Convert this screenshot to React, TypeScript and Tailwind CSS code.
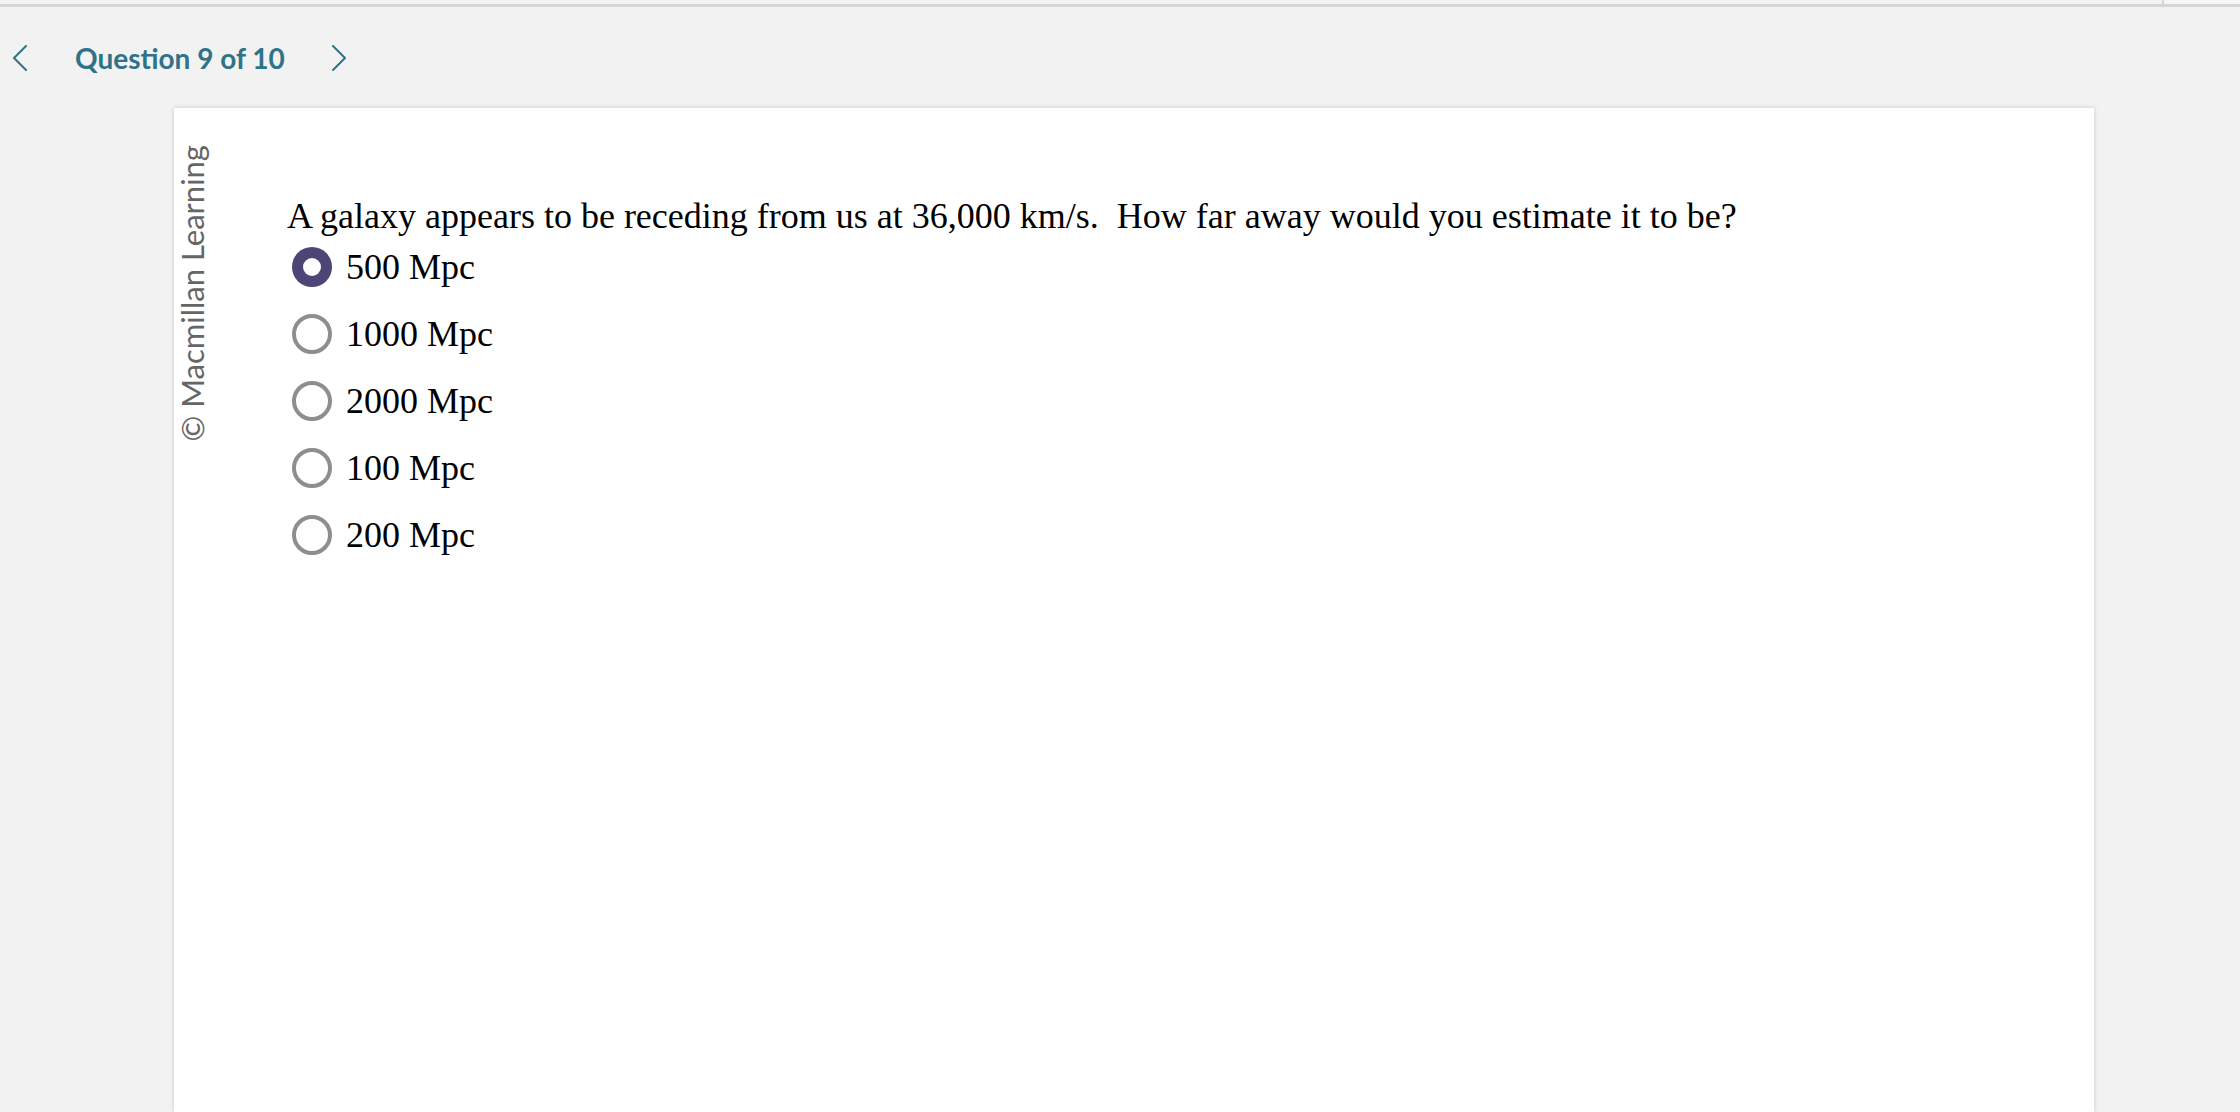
import React from "react";

const options = ["500 Mpc", "1000 Mpc", "2000 Mpc", "100 Mpc", "200 Mpc"];

function Chevron({ dir }: { dir: "left" | "right" }) {
  return (
    <svg width="16" height="26" viewBox="0 0 16 26" className="shrink-0">
      <polyline
        points={dir === "left" ? "14,1 2,13 14,25" : "2,1 14,13 2,25"}
        fill="none"
        stroke="#2f7389"
        strokeWidth="2"
        strokeLinecap="round"
        strokeLinejoin="round"
      />
    </svg>
  );
}

function Radio({ selected }: { selected: boolean }) {
  if (selected) {
    return (
      <div className="w-[40px] h-[40px] rounded-full bg-[#4e4577] flex items-center justify-center shrink-0">
        <div className="w-[18px] h-[18px] rounded-full bg-white" />
      </div>
    );
  }
  return <div className="w-[40px] h-[40px] rounded-full border-[4px] border-[#8e8e8e] bg-white shrink-0" />;
}

export default function App() {
  return (
    <div className="w-[2240px] h-[1112px] overflow-hidden bg-[#f2f2f2] flex flex-col">
      <div className="h-[4px] shrink-0 flex bg-[#f3f3f3]">
        <div className="w-[2162px]" />
        <div className="w-[2px] bg-[#d6d6d6]" />
        <div className="flex-1 bg-[#f6f6f6]" />
      </div>
      <div className="h-[3px] shrink-0 bg-[#d6d6d6]" />
      <div className="h-[101px] shrink-0 flex items-center pl-[12px]">
        <Chevron dir="left" />
        <div className="ml-[47px] font-['Lato',sans-serif] font-bold text-[28px] text-[#2f7389] whitespace-nowrap">
          Question 9 of 10
        </div>
        <div className="ml-[46px]">
          <Chevron dir="right" />
        </div>
      </div>
      <div className="ml-[174px] w-[1920px] flex-1 bg-white shadow-[0_0_4px_rgba(0,0,0,0.18)] flex">
        <div className="w-[113px] shrink-0 pt-[37px] pl-[3px]">
          <div className="[writing-mode:vertical-rl] [text-orientation:sideways] rotate-180 font-['Lato',sans-serif] text-[31px] leading-[31px] text-[#666666] whitespace-nowrap">
            © Macmillan Learning
          </div>
        </div>
        <div className="pt-[90px] flex flex-col font-['Liberation_Serif',serif] text-[36px] leading-[36px] text-black">
          <div className="whitespace-nowrap">
            A galaxy appears to be receding from us at 36,000 km/s.&nbsp; How far away would you estimate it to be?
          </div>
          <div className="-mt-[1px] flex flex-col">
            {options.map((o, i) => (
              <div key={o} className="h-[67px] flex items-center pl-[5px] gap-[14px]">
                <Radio selected={i === 0} />
                <span className="whitespace-nowrap">{o}</span>
              </div>
            ))}
          </div>
        </div>
      </div>
    </div>
  );
}
